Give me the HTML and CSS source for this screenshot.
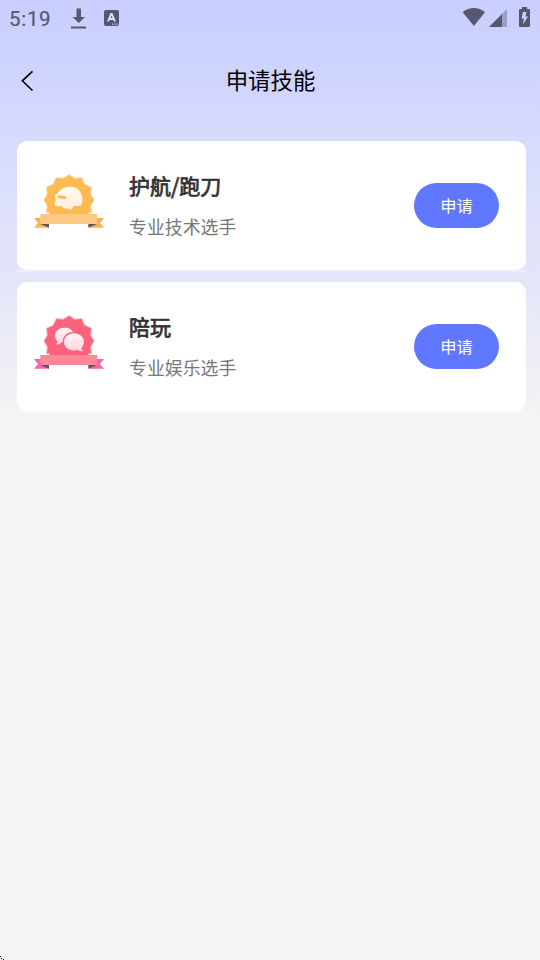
FILE: index.html
```html
<!DOCTYPE html>
<html lang="zh-CN">
<head>
<meta charset="utf-8">
<title>申请技能</title>
<link rel="stylesheet" href="styles.css">
</head>
<body>
<div class="statusbar">
  <span class="time">5:19</span>
  <svg class="download" width="16" height="22" viewBox="0 0 16 22"><path d="M5.500 .5h4.500v8.500h4l-6.200 6L1.500 9h4zM0 18.500h15v2H0z"/></svg>
  <svg class="input-method" width="15" height="16" viewBox="0 0 15 16"><rect width="15" height="16" rx="2"/><path class="cutout-line" d="M4 11.500 7.200 4h.6L11 11.500M5.200 9h4.600"/><path class="cutout" d="M8 13.500h1.200v1.200H8zM10.300 13.500h1.200v1.200h-1.200zM12.500 13.500h1.200v1.200h-1.200z"/></svg>
  <span class="spacer"></span>
  <svg class="wifi" width="24" height="20" viewBox="0 0 24 20"><path d="M.7 5.200Q11.800-3.200 23 5.200L11.900 19z"/></svg>
  <svg class="signal" width="18" height="18" viewBox="0 0 18 18"><path opacity=".4" d="M13 5 18 0v18h-5z"/><path d="M0 18 13 5v13z"/></svg>
  <svg class="battery" width="11" height="20" viewBox="0 0 11 20"><path d="M3 0h5v2h1.700Q11 2 11 3.300v15.400Q11 20 9.700 20H1.300Q0 20 0 18.700V3.300Q0 2 1.300 2H3z"/><path class="cutout" d="M7.500 5H4L2.500 11.500h2.300L4 17.500 9 9.500H6.300z"/></svg>
</div>
<header class="navbar">
  <svg class="back" width="14" height="22" viewBox="0 0 14 22"><path d="M12.500 1.300 2.300 10.800l10.200 9.700"/></svg>
  <h1>申请技能</h1>
</header>
<main class="skills">
  <section class="card">
    <svg class="badge gold" viewBox="0 0 270 225">
      <defs><linearGradient id="cream" x2="0" y2="1"><stop offset="0" stop-color="#fffaf2"/><stop offset="1" stop-color="#ffeed8"/></linearGradient></defs>
      <path class="seal" d="M76 150 77 143 68 143 70 122 60 105 70 88 68 67 88 58 97 38 118 40 135 29 152 40 173 38 182 58 202 67 200 88 210 105 200 122 202 143 193 143 194 150z"/>
      <path class="tail" d="M30 159h45v29H30l12-14zM240 159h-45v29h45l-12-14z"/>
      <path class="fold" d="M49 177h26v11zM219 177h-26v11z"/>
      <path class="band" d="M49 147h170v30H49z"/>
      <path fill="url(#cream)" d="M100 87C106 73 121 65 139 65c23 0 36 17 36 39 0 10-3 16-7 19l-20 1-6 10-24-5-3-5-23-1 3-21-3-4 2-10z"/>
      <path class="visor" d="M102 90 126 94 125 102 101 99z"/>
    </svg>
    <div class="info"><h2>护航/跑刀</h2><p>专业技术选手</p></div>
    <button class="apply">申请</button>
  </section>
  <section class="card">
    <svg class="badge rose" viewBox="0 0 270 225">
      <defs><linearGradient id="blush" x2="0" y2="1"><stop offset="0" stop-color="#fff3f5"/><stop offset="1" stop-color="#ffd7de"/></linearGradient></defs>
      <path class="seal" d="M76 150 77 143 68 143 70 122 60 105 70 88 68 67 88 58 97 38 118 40 135 29 152 40 173 38 182 58 202 67 200 88 210 105 200 122 202 143 193 143 194 150z"/>
      <path class="tail" d="M30 159h45v29H30l12-14zM240 159h-45v29h45l-12-14z"/>
      <path class="fold" d="M49 177h26v11zM219 177h-26v11z"/>
      <path class="band" d="M49 147h170v30H49z"/>
      <path fill="url(#blush)" d="M121 65c15 0 23 6 26 13-18 0-31 12-31 30l-5 2c-4 5-10 6-15 5 3-3 4-6 3-10-13-17-4-40 22-40z"/>
      <path fill="url(#blush)" d="M150 82c17 0 30 11 30 26 0 8-3 13-8 18 0 4 2 7 6 9-7 1-12 0-16-3-23 6-42-7-42-24 0-15 13-26 30-26z"/>
    </svg>
    <div class="info"><h2>陪玩</h2><p>专业娱乐选手</p></div>
    <button class="apply">申请</button>
  </section>
</main>
<svg class="corner" width="4" height="4" viewBox="0 0 4 4"><path d="M0 0h1v1H0zM1 2h1v1H1zM3 3h1v1H3z"/></svg>
</body>
</html>
```
FILE: styles.css
```css
* { box-sizing: border-box; }
body {
  margin: 0;
  height: 960px;
  overflow: hidden;
  position: relative;
  background: #f4f4f4 linear-gradient(#c9ceff 0, #cdd2ff 60px, #d7dbfd 140px, #e3e5f8 276px, #f4f4f4 420px) no-repeat;
  font-family: "Noto Sans CJK SC", sans-serif;
}
h1, h2, p { margin: 0; font-weight: 400; }
svg { display: block; flex: none; }
.statusbar { height: 36px; display: flex; align-items: flex-start; padding: 0 10px 0 9px; fill: #55586f; }
.time { width: 62px; padding-top: 7px; font: 400 20.5px/24px Roboto, sans-serif; letter-spacing: .7px; color: #55586f; -webkit-text-stroke: .2px #55586f; }
.download { margin-top: 8px; }
.input-method { margin: 10px 0 0 17px; }
.cutout { fill: #cbd0ff; }
.cutout-line { fill: none; stroke: #dfe2ff; stroke-width: 1.9; }
.spacer { flex: 1; }
.wifi { margin-top: 7px; }
.signal { margin: 9px 12px 0 3px; }
.battery { margin-top: 7px; }
.navbar { height: 90px; display: grid; grid-template-columns: 40px 1fr 40px; align-items: center; padding: 0 0 0 1px; }
.back { margin-left: 19px; fill: none; stroke: #000; stroke-width: 1.6; }
.navbar h1 { font-size: 22.400px; line-height: 32px; padding-bottom: 4px; text-align: center; color: #000; }
.skills { padding: 15px 14px 0 17px; display: flex; flex-direction: column; gap: 12px; }
.card { height: 129px; display: flex; align-items: flex-start; background: #fff; border-radius: 10px; position: relative; }
.card::after { content: ""; position: absolute; left: 0; right: 0; top: 129px; height: 2px; background: rgba(255, 255, 255, .4); border-radius: 0 0 2px 2px; }
.badge { width: 90px; height: 75px; margin: 24px 0 0 7px; }
.gold .seal { fill: #ffba51; stroke: #ffd18d; stroke-width: 3; }
.gold .tail { fill: #fdb24e; }
.gold .band { fill: #fbc983; }
.gold .visor { fill: #fdb657; }
.rose .seal { fill: #fb627e; stroke: #fda0b0; stroke-width: 3; }
.rose .tail { fill: #fa62b2; }
.rose .band { fill: #fc8795; }
.fold { fill: #5c5656; }
.info { flex: 1; padding: 28px 0 0 15px; }
.info h2 { font-size: 21px; line-height: 32px; color: #333; -webkit-text-stroke: .75px #333; }
.info p { margin-top: 12px; font-size: 17.900px; line-height: 26px; color: #777; }
.apply { width: 85px; height: 45px; margin: 42px 27px 0 0; padding: 0; border: 0; border-radius: 23px; background: #6077ff; color: #fff; font: 16.300px/45px "Noto Sans CJK SC", sans-serif; }
.corner { position: absolute; left: 0; bottom: 0; }
```
